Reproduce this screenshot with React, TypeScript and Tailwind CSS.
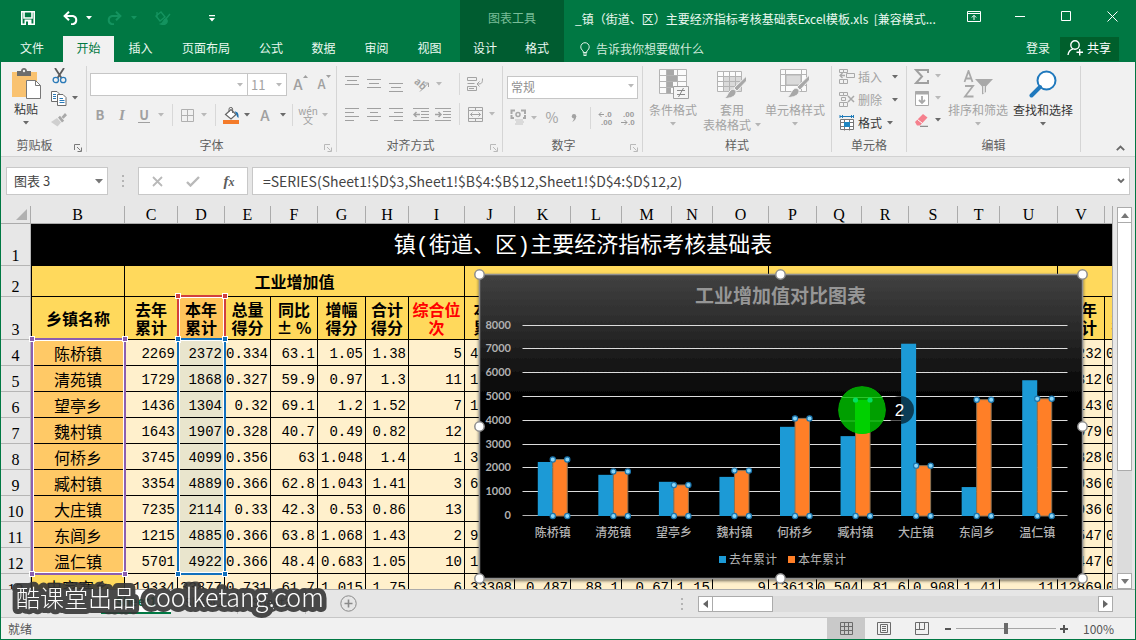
import React from "react";
import type { ReactNode } from "react";

const BORDER_ALL = "border-[#ababab]";

/* ---------- small building blocks ---------- */

function Caret({ className = "text-[#6a6a6a]" }: { className?: string }) {
  return (
    <svg width="6" height="4" viewBox="0 0 6 4" className={className} aria-hidden="true">
      <path d="M0 0h6L3 3.6z" fill="currentColor" />
    </svg>
  );
}

function Tool({ label, className = "w-[22px]", children }: { label: string; className?: string; children: ReactNode }) {
  return (
    <button type="button" aria-label={label} className={`flex h-[22px] shrink-0 items-center justify-center ${className}`}>
      {children}
    </button>
  );
}

function Sep({ className = "w-[10px]" }: { className?: string }) {
  return (
    <span className={`flex h-[22px] shrink-0 justify-center ${className}`}>
      <span className="h-full w-px bg-[#d8d8d8]" />
    </span>
  );
}

function Launcher({ className = "text-[#7a7a7a]" }: { className?: string }) {
  return (
    <button type="button" aria-label="对话框启动器" className={`absolute bottom-0 right-[4px] ${className}`}>
      <svg width="8" height="8" viewBox="0 0 8 8" fill="none" stroke="currentColor">
        <path d="M.5 6V.5H6M3 3l3.5 3.5M7.5 3.5v4h-4" />
      </svg>
    </button>
  );
}

function Group({ label, width, launcher, children }: { label: string; width: string; launcher?: ReactNode; children: ReactNode }) {
  return (
    <section aria-label={label} className={`relative my-1 flex shrink-0 flex-col border-r border-[#d5d5d5] ${width}`}>
      <div className="flex-1">{children}</div>
      <div className="text-center text-xs leading-[14px] text-[#606060]">{label}</div>
      {launcher}
    </section>
  );
}

function BigButton({ icon, lines, className, dark, inlineCaret }: { icon: ReactNode; lines: string[]; className: string; dark?: boolean; inlineCaret?: boolean }) {
  return (
    <button type="button" className={`flex shrink-0 flex-col items-center pt-[2px] text-xs leading-[15px] ${dark ? "text-[#363636]" : "text-[#a3a3a3]"} ${className}`}>
      <span className="mb-[2px] flex h-8 items-center justify-center">{icon}</span>
      {lines.map((l, i) => (
        <span key={l} className="flex items-center gap-1 whitespace-nowrap">
          {l}
          {inlineCaret && i === lines.length - 1 && <Caret className="text-[#b5b5b5]" />}
        </span>
      ))}
      {!inlineCaret && <Caret className={`mt-[5px] ${dark ? "text-[#6a6a6a]" : "text-[#b5b5b5]"}`} />}
    </button>
  );
}

function Lines({ rows, y = 0 }: { rows: [number, number][]; y?: number }) {
  return (
    <svg width="14" height="18" viewBox="0 0 14 18" stroke="#a0a0a0" aria-hidden="true">
      {rows.map(([a, b], i) => (
        <path key={i} d={`M${a} ${y + 0.5 + i * 4}H${b}`} />
      ))}
    </svg>
  );
}

/* ---------- title bar and tabs ---------- */

const TABS: [string, string][] = [
  ["文件", "w-[62px]"],
  ["开始", "w-[51px]"],
  ["插入", "w-[53px]"],
  ["页面布局", "w-[78px]"],
  ["公式", "w-[52px]"],
  ["数据", "w-[53px]"],
  ["审阅", "w-[53px]"],
  ["视图", "w-[53px]"],
];

function Header() {
  return (
    <header className="flex h-[62px] shrink-0 bg-[#007843] text-xs text-[#eaf8f0]">
      <div className="flex w-[459px] shrink-0 flex-col">
        <div className="flex h-9 items-center">
          <Tool label="保存" className="ml-4 w-[22px]">
            <svg width="14" height="14" viewBox="0 0 14 14" fill="none" stroke="#fff" strokeWidth="1.6">
              <path d="M.8.8h12.400v12.400H.8z" />
              <path d="M3 1v6h8V1" />
              <path d="M3.500 8.500h7V14h-7z" fill="#fff" stroke="none" />
              <path d="M5 10.500h2V14H5z" fill="#007843" stroke="none" />
            </svg>
          </Tool>
          <Tool label="撤消" className="ml-[21px] w-[22px]">
            <svg width="16" height="14" viewBox="0 0 16 14" fill="none" stroke="#fff" strokeWidth="2">
              <path d="M1.500 5H10a4.200 4.200 0 0 1 0 8.200H8" />
              <path d="M6 .8 1.600 5 6 9.200" />
            </svg>
          </Tool>
          <Tool label="撤消选项" className="w-[14px]"><Caret className="text-white" /></Tool>
          <Tool label="恢复" className="ml-[7px] w-[22px]">
            <svg width="16" height="14" viewBox="0 0 16 14" fill="none" stroke="#14935f" strokeWidth="2">
              <path d="M14.500 5H6a4.200 4.200 0 0 0 0 8.200h2" />
              <path d="M10 .8 14.400 5 10 9.200" />
            </svg>
          </Tool>
          <Tool label="恢复选项" className="w-[18px]"><Caret className="text-[#14935f]" /></Tool>
          <Tool label="格式刷" className="ml-[8px] w-[22px]">
            <svg width="17" height="16" viewBox="0 0 17 16" fill="none" stroke="#14935f" strokeWidth="1.400">
              <path d="m2 6 5-4 4 5-5 4zM3 2v5M16 4l-5 6" />
              <path d="M12 9c-3 0-2 4-5 5 3 1 7 0 6-4z" fill="#14935f" />
            </svg>
          </Tool>
          <Tool label="自定义快速访问工具栏" className="ml-[28px] w-[22px]">
            <svg width="6" height="7" viewBox="0 0 6 7" fill="#fff"><path d="M0 0h6v1.200H0zM0 3h6L3 6.500z" /></svg>
          </Tool>
        </div>
        <nav className="flex h-[26px]">
          {TABS.map(([name, w]) => (
            <button key={name} type="button" className={`pb-[2px] ${w} ${name === "开始" ? "bg-[#f1f1f1] text-[#007843]" : ""}`}>
              {name}
            </button>
          ))}
        </nav>
      </div>
      <div className="flex w-[104px] shrink-0 flex-col bg-[#005c30]">
        <div className="flex h-9 items-center justify-center text-[#79bd98]">图表工具</div>
        <nav className="flex h-[26px]">
          <button type="button" className="w-[50px] pb-[2px]">设计</button>
          <button type="button" className="w-[54px] pb-[2px]">格式</button>
        </nav>
      </div>
      <div className="flex min-w-0 flex-1 flex-col">
        <div className="flex h-9 items-center">
          <h1 className="min-w-0 flex-1 truncate pl-[11px] pt-[2px] whitespace-pre">
            _镇（街道、区）主要经济指标考核基础表Excel模板.xls  [兼容模式...
          </h1>
          <div className="flex shrink-0 items-center pb-1">
            <Tool label="功能区显示选项" className="w-[46px]">
              <svg width="14" height="11" viewBox="0 0 14 11" fill="none" stroke="#fff"><path d="M.5.5h13v10H.5zM.5 2.500h13M7 9V4.500M4.800 6.500 7 4.300l2.200 2.200" /></svg>
            </Tool>
            <Tool label="最小化" className="w-[46px]">
              <svg width="10" height="10" viewBox="0 0 10 10" stroke="#fff"><path d="M0 5.500h10" /></svg>
            </Tool>
            <Tool label="最大化" className="w-[46px]">
              <svg width="10" height="10" viewBox="0 0 10 10" fill="none" stroke="#fff"><path d="M.5.5h9v9h-9z" /></svg>
            </Tool>
            <Tool label="关闭" className="w-[46px]">
              <svg width="11" height="11" viewBox="0 0 11 11" stroke="#fff"><path d="m.5.5 10 10m0-10-10 10" /></svg>
            </Tool>
          </div>
        </div>
        <div className="flex h-[26px] items-center pr-4">
          <svg width="10" height="14" viewBox="0 0 10 14" fill="none" stroke="#e0f3e9" className="ml-4" aria-hidden="true">
            <path d="M3.200 10.500V9C1.500 7.800.8 6.500.8 4.900a4.200 4.200 0 0 1 8.400 0c0 1.600-.7 2.900-2.400 4.100v1.500zM3 12h4M3.500 13.500h3" />
          </svg>
          <a href="#tell" className="ml-[6px] text-[#cfeadb]">告诉我你想要做什么</a>
          <button type="button" className="ml-auto pb-[2px]">登录</button>
          <button type="button" className="ml-[10px] flex h-6 items-center gap-1 bg-[#005f2c] pb-[2px] pl-[7px] pr-2 text-white">
            <svg width="16" height="16" viewBox="0 0 16 16" fill="none" stroke="#fff" strokeWidth="1.400">
              <circle cx="8" cy="5" r="4.200" />
              <path d="M1 15c.5-3.500 2.500-5.500 5-6.200M9.500 12.200H16M12.700 9v6.500" />
            </svg>
            共享
          </button>
        </div>
      </div>
    </header>
  );
}

/* ---------- ribbon ---------- */

function CellRow({ label, icon, dark }: { label: string; icon: ReactNode; dark?: boolean }) {
  return (
    <button type="button" className={`flex h-[23px] items-center pl-[7px] ${dark ? "text-[#363636]" : "text-[#a3a3a3]"}`}>
      <span className="flex w-[18px] justify-start">{icon}</span>
      <span className="ml-px text-xs">{label}</span>
      <Caret className={`text-[#6a6a6a] ${dark ? "ml-[5px]" : "ml-[10px]"}`} />
    </button>
  );
}

const LIGHT = "text-[#b9b9b9]";

function Ribbon() {
  return (
    <div className="flex h-[95px] shrink-0 border-b border-[#d2d2d2] bg-[#f1f1f1]">
      <Group label="剪贴板" width="w-[86px] pr-[18px]" launcher={<Launcher />}>
        <div className="-mt-px flex">
          <BigButton
            dark
            className="w-[50px]"
            lines={["粘贴"]}
            icon={
              <svg width="29" height="31" viewBox="0 0 29 31" aria-hidden="true">
                <path d="M0 4h25v25H0z" fill="#f9c270" />
                <path d="M5 3h4c0-4 6-4 6 0h4v5H5z" fill="#6d6d6d" />
                <circle cx="12" cy="3" r="1.200" fill="#f1f1f1" />
                <path d="M14.500 12.500h9l5 5v13h-14z" fill="#fff" stroke="#787878" />
                <path d="M23.500 12.500v5h5" fill="none" stroke="#787878" />
              </svg>
            }
          />
          <div className="flex flex-col">
            <Tool label="剪切" className="w-4">
              <svg width="15" height="16" viewBox="0 0 15 16" fill="none">
                <path d="m3 0 6.500 10M12 0 5.500 10" stroke="#5c5c5c" strokeWidth="1.800" />
                <circle cx="3.800" cy="12" r="2.700" stroke="#2a7ab8" strokeWidth="1.300" />
                <circle cx="11.200" cy="12" r="2.700" stroke="#2a7ab8" strokeWidth="1.300" />
              </svg>
            </Tool>
            <div className="flex">
              <Tool label="复制" className="w-4">
                <svg width="16" height="15" viewBox="0 0 16 15" fill="#fff" stroke="#6c6c6c">
                  <path d="M.5.5H6l2.500 2.500v7.500h-8z" />
                  <path d="M6.500 3.500H12l3 3v8H6.500z" />
                  <path d="M2 3.500h3M2 5.500h3M2 7.500h3M8.500 7.500H12M8.500 9.500h5M8.500 11.500h5" stroke="#2a7ab8" />
                </svg>
              </Tool>
              <Tool label="复制选项" className="w-[16px]"><Caret /></Tool>
            </div>
            <Tool label="格式刷" className="w-4">
              <svg width="16" height="14" viewBox="0 0 16 14">
                <path d="m0 9 6-4 4 4.500L6.500 13.500z" fill="#cfcfcf" />
                <path d="m7 4.500 2-1.700 4.200 5L11 9.500zM10.500 4 14 0l2 2.300-3.500 3.500z" fill="#a9a9a9" />
              </svg>
            </Tool>
          </div>
        </div>
      </Group>

      <Group label="字体" width="w-[250px]" launcher={<Launcher className={LIGHT} />}>
        <div className="flex items-start pl-[3px] pt-[7px]">
          <div className="flex h-[23px] w-[158px] items-center border border-[#c6c6c6] bg-white pr-1">
            <input aria-label="字体名称" defaultValue="" className="h-full min-w-0 flex-1 bg-transparent px-1 text-xs outline-none" />
            <Caret className={LIGHT} />
          </div>
          <div className="-ml-px flex h-[23px] w-[40px] items-center border border-[#c6c6c6] bg-white pr-1">
            <input aria-label="字号" defaultValue="11" className="h-full min-w-0 flex-1 bg-transparent pl-[3px] text-[13px] text-[#a3a3a3] outline-none" />
            <Caret className={LIGHT} />
          </div>
          <Tool label="增大字号" className="w-[27px]">
            <span className="flex items-start font-medium text-[#a0a0a0]"><span className="text-[15px] leading-[22px]">A</span><svg width="5" height="3" viewBox="0 0 5 3" className="mt-[2px]"><path d="M0 3h5L2.500 0z" fill="currentColor" /></svg></span>
          </Tool>
          <Tool label="减小字号" className="w-[20px]">
            <span className="flex items-start font-medium text-[#a0a0a0]"><span className="text-[13px] leading-[22px]">A</span><svg width="5" height="3" viewBox="0 0 5 3" className="mt-[2px]"><path d="M0 0h5L2.500 3z" fill="currentColor" /></svg></span>
          </Tool>
        </div>
        <div className="flex pl-[2px] pt-2 text-[13px] text-[#a0a0a0]">
          <Tool label="加粗"><b className="text-[13px]">B</b></Tool>
          <Tool label="倾斜"><i className="font-['Liberation_Serif',serif] text-[15px] font-bold">I</i></Tool>
          <Tool label="下划线"><span className="border-b border-[#a0a0a0] px-px font-bold leading-[14px]">U</span></Tool>
          <Tool label="下划线选项" className="w-3"><Caret className={LIGHT} /></Tool>
          <Sep />
          <Tool label="边框" className="w-5">
            <svg width="13" height="13" viewBox="0 0 13 13" fill="none" stroke="#b0b0b0"><path d="M.5.5h12v12H.5zM6.500.5v12M.5 6.500h12" /></svg>
          </Tool>
          <Tool label="边框选项" className="w-[14px]"><Caret className={LIGHT} /></Tool>
          <Sep className="w-2" />
          <Tool label="填充颜色" className="w-6">
            <svg width="17" height="17" viewBox="0 0 17 17" fill="none">
              <path d="m2.500 7.500 5.500-5 5 5L8 12z" fill="#fff" stroke="#666" strokeWidth="1.200" />
              <path d="M6 5V2.200a1.800 1.800 0 0 1 3.600 0V6" stroke="#666" />
              <path d="M11.500 4.500c3 0 4.500 2 4 6.500-1.500-.5-2-3-2.500-4.500z" fill="#1e6fae" />
              <path d="M0 13h16v4H0z" fill="#f47b2a" />
            </svg>
          </Tool>
          <Tool label="填充选项" className="w-2"><Caret /></Tool>
          <Tool label="字体颜色" className="w-7"><b className="text-[15px] font-medium">A</b></Tool>
          <Tool label="字体颜色选项" className="w-2"><Caret /></Tool>
          <Sep />
          <Tool label="拼音" className="w-[22px]">
            <span className="flex flex-col items-center text-[10px] leading-[9px]"><span>wén</span><span>文</span></span>
          </Tool>
          <Tool label="拼音选项" className="w-3"><Caret className={LIGHT} /></Tool>
        </div>
      </Group>

      <Group label="对齐方式" width="w-[166px] pr-[18px]" launcher={<Launcher className={LIGHT} />}>
        <div className="flex pl-1 pt-[7px]">
          <Tool label="顶端对齐"><Lines y={1} rows={[[0, 14], [2, 12], [0, 14]]} /></Tool>
          <Tool label="垂直居中"><Lines y={4} rows={[[0, 14], [2, 12], [0, 14]]} /></Tool>
          <Tool label="底端对齐"><Lines y={8} rows={[[0, 14], [2, 12], [0, 14]]} /></Tool>
          <Tool label="方向" className="w-[28px]">
            <svg width="20" height="18" viewBox="0 0 20 18" fill="none" stroke="#a3a3a3">
              <text x="3" y="10" fontSize="10" fontWeight="bold" fill="#a3a3a3" stroke="none" transform="rotate(40 6 8)">ab</text>
              <path d="m9 16.500 8-8M13.500 8h4v4" />
            </svg>
          </Tool>
          <Tool label="方向选项" className="w-[8px]"><Caret className={LIGHT} /></Tool>
          <Sep className="ml-3 w-2" />
          <Tool label="自动换行" className="w-6">
            <svg width="17" height="16" viewBox="0 0 17 16" fill="none" stroke="#a3a3a3">
              <path d="M.5 1.500h9v3h-9zM.5 7.500h7M.5 10.500h9v4h-9zM2 12.500h5M15.500 2.500c0 5-1 5.500-5 5.500M12.500 5.500 10 8l2.500 2.500" />
            </svg>
          </Tool>
        </div>
        <div className="flex pl-1 pt-2">
          <Tool label="左对齐"><Lines y={3} rows={[[0, 14], [0, 9], [0, 14], [0, 9]]} /></Tool>
          <Tool label="居中"><Lines y={3} rows={[[0, 14], [3, 11], [0, 14], [3, 11]]} /></Tool>
          <Tool label="右对齐"><Lines y={3} rows={[[0, 14], [5, 14], [0, 14], [5, 14]]} /></Tool>
          <Tool label="减少缩进量" className="w-[28px]">
            <svg width="16" height="13" viewBox="0 0 16 13" fill="none" stroke="#a3a3a3"><path d="M0 .5h16M8 3.500h8M8 6.500h8M8 9.500h8M0 12.500h16" /><path d="M7 6.500H1M3.500 4 1 6.500 3.500 9" strokeWidth="1.500" /></svg>
          </Tool>
          <Tool label="增加缩进量" className="w-4">
            <svg width="16" height="13" viewBox="0 0 16 13" fill="none" stroke="#a3a3a3"><path d="M0 .5h16M8 3.500h8M8 6.500h8M8 9.500h8M0 12.500h16" /><path d="M0 6.500h6M3.500 4 6 6.500 3.500 9" strokeWidth="1.500" /></svg>
          </Tool>
          <Sep className="ml-1 w-2" />
          <Tool label="合并后居中" className="w-6">
            <svg width="15" height="15" viewBox="0 0 15 15" fill="none" stroke="#a3a3a3"><path d="M.5.5h14v14H.5zM.5 3.500h14M.5 11.500h14M7.500.5v3M7.500 11.500v3M2.500 7.500h10M4.500 5.500l-2 2 2 2M10.500 5.500l2 2-2 2" /></svg>
          </Tool>
          <Tool label="合并选项" className="w-[10px]"><Caret className={LIGHT} /></Tool>
        </div>
      </Group>

      <Group label="数字" width="w-[140px] pr-[18px]" launcher={<Launcher className={LIGHT} />}>
        <div className="-mr-[18px] px-1 pt-[7px]">
          <div className="relative">
            <select aria-label="数字格式" className="h-[23px] w-full appearance-none border border-[#c6c6c6] bg-white pl-[3px] text-xs text-[#8f8f8f]">
              <option>常规</option>
            </select>
            <span className="pointer-events-none absolute inset-y-0 right-1 flex items-center"><Caret className={LIGHT} /></span>
          </div>
        </div>
        <div className="flex pl-[3px] pt-2 text-[#a3a3a3]">
          <Tool label="会计数字格式" className="w-6">
            <svg width="17" height="17" viewBox="0 0 17 17" fill="none" stroke="#a9a9a9"><path d="M1.500 5V1.500H5M11 1.500h4V5M1.500 6v3H4M15 6v3h-2" strokeWidth="2" /><circle cx="8" cy="5.500" r="2" strokeWidth="1.500" /><path d="M5 11h8M6 13h8M5 15h8" strokeWidth="1.200" stroke="#c4c4c4" /></svg>
          </Tool>
          <Tool label="会计格式选项" className="w-2"><Caret className={LIGHT} /></Tool>
          <Tool label="百分比样式" className="w-7"><span className="text-[14px]">%</span></Tool>
          <Tool label="千位分隔样式" className="w-4">
            <svg width="6" height="8" viewBox="0 0 6 8" fill="#a3a3a3"><circle cx="3" cy="2.200" r="2.200" /><path d="M5.200 2c0 3-1.500 5-4 6 1-1.500 1.800-2.500 1.800-4z" /></svg>
          </Tool>
          <Sep className="ml-1 w-2" />
          <Tool label="增加小数位数" className="w-[24px]">
            <svg width="17" height="20" viewBox="0 0 17 20" fill="#9b9b9b" fontSize="8" fontWeight="bold" className="font-['Liberation_Sans',sans-serif]"><text x="7" y="9">.0</text><text x="3" y="17">.00</text><path d="M1 6.500h5M3.500 4 1 6.500 3.500 9" stroke="#9b9b9b" fill="none" /></svg>
          </Tool>
          <Tool label="减少小数位数" className="w-[20px]">
            <svg width="17" height="20" viewBox="0 0 17 20" fill="#9b9b9b" fontSize="8" fontWeight="bold" className="font-['Liberation_Sans',sans-serif]"><text x="3" y="9">.00</text><text x="8" y="17">.0</text><path d="M1 14.500h6M4.500 12 7 14.500 4.500 17" stroke="#9b9b9b" fill="none" /></svg>
          </Tool>
        </div>
      </Group>

      <Group label="样式" width="w-[189px]">
        <div className="flex">
          <BigButton
            className="w-[60px]"
            lines={["条件格式"]}
            icon={
              <svg width="31" height="30" viewBox="0 0 31 30" fill="none" stroke="#b4b4b4">
                <path d="M1.500.5h27v24h-27zM1.500 6.500h27M1.500 12.500h27M1.500 18.500h27M8.500.5v24M19.500.5v24" fill="#fbfbfb" />
                <path d="M9 1h7v5H9zM9 7h10v5H9zM9 13h6v5H9zM9 19h4v5H9z" fill="#a8a8a8" stroke="none" />
                <path d="M15.500 17.500h15v12h-15z" fill="#f5f5f5" stroke="#a0a0a0" />
                <path d="M19 21.500h8M19 25.500h8M25.500 19l-5 9" stroke="#8a8a8a" />
              </svg>
            }
          />
          <BigButton
            className="w-[58px]"
            inlineCaret
            lines={["套用", "表格格式"]}
            icon={
              <svg width="30" height="30" viewBox="0 0 30 30" fill="none" stroke="#b4b4b4">
                <path d="M.5 2.500h24v20H.5z" fill="#fbfbfb" />
                <path d="M7 8h17v14H7z" fill="#dadada" stroke="none" />
                <path d="M.5 7.500h24M.5 12.500h24M.5 17.500h24M6.500 2.500v20M12.500 2.500v20M18.500 2.500v20" />
                <path d="M29.500 7v5L20 22l-3-3z" fill="#a8a8a8" stroke="#f1f1f1" />
                <path d="M16 20c3 1 4 3 2 6-2 2.500-6 3.500-11 3.500 4-2 4-8 9-9.500z" fill="#a8a8a8" stroke="#f1f1f1" />
              </svg>
            }
          />
          <BigButton
            className="w-[68px]"
            lines={["单元格样式"]}
            icon={
              <svg width="30" height="30" viewBox="0 0 30 30" fill="none" stroke="#b4b4b4">
                <path d="M.5.5h26v22H.5z" fill="#fbfbfb" />
                <path d="M6 6h15v10H6z" fill="#dadada" />
                <path d="M.5 5.500h26M.5 16.500h26M5.500.5v22M21.500.5v22" />
                <path d="M29.500 6v5L20 21l-3-3z" fill="#a8a8a8" stroke="#f1f1f1" />
                <path d="M16 19c3 1 4 3 2 6-2 2.500-6 3.500-11 3.500 4-2 4-8 9-9.500z" fill="#a8a8a8" stroke="#f1f1f1" />
              </svg>
            }
          />
        </div>
      </Group>

      <Group label="单元格" width="w-[75px]">
        <div className="-mt-px flex flex-col items-start">
          <CellRow label="插入" icon={<svg width="16" height="15" viewBox="0 0 16 15" fill="none" stroke="#a9a9a9"><path d="M.5.5h4v3h-4zM4.500.5h4v3h-4zM7.500 4.500h8v4h-8zM.5 10.500h4v4h-4zM4.500 10.500h4v4h-4z" /><path d="M6 6.500H1M3.500 4 1 6.500 3.500 9" strokeWidth="1.300" /></svg>} />
          <CellRow label="删除" icon={<svg width="16" height="15" viewBox="0 0 16 15" fill="none" stroke="#a9a9a9"><path d="M.5.5h4v3h-4zM4.500.5h4v3h-4zM2.500 5.500h4v3h-4zM.5 10.500h4v4h-4zM4.500 10.500h4v4h-4z" /><path d="m9 4 6 6m0-6-6 6" strokeWidth="1.500" /></svg>} />
          <CellRow label="格式" dark icon={<svg width="16" height="16" viewBox="0 0 16 16" fill="none"><path d="M1.500 4.500h13v10h-13zM1.500 7.500h13M1.500 11.500h13M5.500 4.500v11M10.500 4.500v11" fill="#fff" stroke="#777" /><path d="M5 7h6v5H5z" fill="#1f86c0" /><path d="M1 1.500h14M1 0v3M14.500 0v3M4 0 2.500 1.500 4 3M12 0l1.500 1.500L12 3" stroke="#1f7ab8" /></svg>} />
        </div>
      </Group>

      <Group label="编辑" width="w-[174px]">
        <div className="flex">
          <div className="-mt-px flex w-[39px] flex-col pl-[5px]">
            <div className="flex"><Tool label="自动求和" className="w-[19px]"><svg width="15" height="15" viewBox="0 0 15 15" fill="none" stroke="#a0a0a0" strokeWidth="2"><path d="M14 4V1H2l6 6.500L2 14h12v-3" /></svg></Tool><Tool label="求和选项" className="w-[14px]"><Caret className={LIGHT} /></Tool></div>
            <div className="flex"><Tool label="填充" className="w-[19px]"><svg width="14" height="15" viewBox="0 0 14 15" fill="none" stroke="#a9a9a9"><path d="M.5.5h13v14H.5z" fill="#fff" /><path d="M.5 2h13" strokeWidth="3" /><path d="M7 5v7M4 9l3 3 3-3" strokeWidth="1.800" /></svg></Tool><Tool label="填充选项" className="w-[14px]"><Caret className={LIGHT} /></Tool></div>
            <div className="flex"><Tool label="清除" className="w-[19px]"><svg width="14" height="13" viewBox="0 0 14 13"><path d="m0 8 8-8 4.500 3.500L5 11.500H2z" fill="#f5808d" /><path d="m2.500 5.500 5 4" stroke="#fff" strokeWidth="1" /><path d="M5 12.300h8" stroke="#777" /></svg></Tool><Tool label="清除选项" className="w-[14px]"><Caret /></Tool></div>
          </div>
          <BigButton
            className="w-[64px]"
            lines={["排序和筛选"]}
            icon={
              <svg width="30" height="28" viewBox="0 0 30 28" fill="none" stroke="#a9a9a9" strokeWidth="1.800">
                <path d="M1.500 12 5.500 1l4 11M3 8.500h5M2 16h8L2 26.500h8.500" />
                <path d="M12 9h18l-7 7.500V22l-4 2.500v-8z" fill="#a9a9a9" stroke="none" />
                <path d="M21 16v7" stroke="#f1f1f1" strokeWidth="1.500" />
              </svg>
            }
          />
          <BigButton
            dark
            className="w-[66px]"
            lines={["查找和选择"]}
            icon={
              <svg width="28" height="28" viewBox="0 0 28 28" fill="none" stroke="#2079bd">
                <circle cx="17.500" cy="10.500" r="9" fill="#fff" strokeWidth="2" />
                <path d="m11 17-8.500 8.500" strokeWidth="4" strokeLinecap="round" />
              </svg>
            }
          />
        </div>
      </Group>
      <div className="flex flex-1 items-end justify-end pb-[5px] pr-[10px]">
        <button type="button" aria-label="折叠功能区">
          <svg width="9" height="6" viewBox="0 0 9 6" fill="none" stroke="#6a6a6a" strokeWidth="1.800"><path d="M.8 5.200 4.500 1.500l3.700 3.700" /></svg>
        </button>
      </div>
    </div>
  );
}

function FormulaBar() {
  return (
    <div className="flex h-[49px] shrink-0 items-start bg-[#e7e7e7] px-[5px] pt-[10px]">
      <div className="flex h-7 w-[102px] items-center border border-[#c8c8c8] bg-white pr-1">
        <input aria-label="名称框" defaultValue="图表 3" className="min-w-0 flex-1 bg-transparent pl-[7px] text-[13px] text-[#444] outline-none" />
        <svg width="8" height="5" viewBox="0 0 8 5" aria-hidden="true"><path d="M0 0h8L4 4.500z" fill="#777" /></svg>
      </div>
      <div className="flex h-7 w-[30px] flex-col items-center justify-center gap-[3px]">
        <i className="size-[2px] bg-[#b4b4b4]" /><i className="size-[2px] bg-[#b4b4b4]" /><i className="size-[2px] bg-[#b4b4b4]" />
      </div>
      <div className="flex h-7 w-[110px] items-center border border-[#c8c8c8] bg-white text-[#b9b9b9]">
        <Tool label="取消" className="w-9"><svg width="11" height="11" viewBox="0 0 11 11" stroke="currentColor" strokeWidth="1.800"><path d="m1 1 9 9m0-9-9 9" /></svg></Tool>
        <Tool label="输入" className="w-9"><svg width="14" height="11" viewBox="0 0 14 11" fill="none" stroke="currentColor" strokeWidth="2.400"><path d="m1 6 3.500 3.500L13 1" /></svg></Tool>
        <Tool label="插入函数" className="w-9"><i className="font-['Liberation_Serif',serif] text-[15px] font-bold text-[#5c5c5c]">f<span className="text-[12px]">x</span></i></Tool>
      </div>
      <div className="ml-1 flex h-7 min-w-0 flex-1 items-center border border-[#c8c8c8] bg-white pr-1">
        <input
          aria-label="编辑栏"
          defaultValue="=SERIES(Sheet1!$D$3,Sheet1!$B$4:$B$12,Sheet1!$D$4:$D$12,2)"
          className="min-w-0 flex-1 bg-transparent pl-[10px] text-[14px] text-[#444] outline-none"
        />
        <svg width="8" height="6" viewBox="0 0 8 6" fill="none" stroke="#6a6a6a" strokeWidth="1.800" aria-hidden="true"><path d="m1 1 3 3 3-3" /></svg>
      </div>
    </div>
  );
}

/* ---------- worksheet ---------- */

const COLS: [string, number][] = [
  ["B", 94], ["C", 53], ["D", 47], ["E", 46], ["F", 47], ["G", 48], ["H", 43], ["I", 56],
  ["J", 50], ["K", 56], ["L", 51], ["M", 50], ["N", 41], ["O", 56], ["P", 48], ["Q", 45],
  ["R", 47], ["S", 49], ["T", 42], ["U", 58], ["V", 47], ["W", 46],
];

const TOWNS = ["陈桥镇", "清苑镇", "望亭乡", "魏村镇", "何桥乡", "臧村镇", "大庄镇", "东闾乡", "温仁镇"];
const LAST = [2269, 1729, 1436, 1643, 3745, 3354, 7235, 1215, 5701];
const THIS = [2372, 1868, 1304, 1907, 4099, 4889, 2114, 4885, 4922];
const REST = [
  ["0.334", "63.1", "1.05", "1.38", "5", "47310"],
  ["0.327", "59.9", "0.97", "1.3", "11", "16254"],
  ["0.32", "69.1", "1.2", "1.52", "7", "12870"],
  ["0.328", "40.7", "0.49", "0.82", "12", "2415"],
  ["0.356", "63", "1.048", "1.4", "1", "31926"],
  ["0.366", "62.8", "1.043", "1.41", "3", "60117"],
  ["0.33", "42.3", "0.53", "0.86", "13", "7402"],
  ["0.366", "63.8", "1.068", "1.43", "2", "90236"],
  ["0.366", "48.4", "0.683", "1.05", "10", "13805"],
];
const V_COL = ["11232", "10312", "12143", "10079", "10828", "11936", "12936", "10547", "11447"];
const ROW13 = ["史家寨乡", "19334", "33877", "0.731", "61.7", "1.015", "1.75", "6", "33308", "0.487", "88.1", "0.67", "1.15", "9", "13613", "0.504", "81.6", "0.908", "1.41", "11", "12869", "0.521"];

const HEADS: string[][] = [
  ["乡镇名称"], ["去年", "累计"], ["本年", "累计"], ["总量", "得分"], ["同比", "± %"], ["增幅", "得分"], ["合计", "得分"], ["综合位", "次"],
  ["本年", "累计"], ...Array.from({ length: 11 }, () => [] as string[]),
  ["本年", "累计"], ["总量", "得分"],
];

const DATA: string[][] = TOWNS.map((t, i) => [
  t, String(LAST[i]), String(THIS[i]), ...REST[i], ...Array(11).fill(""), V_COL[i], "0.456",
]);

function RowHead({ n }: { n: number }) {
  return (
    <th scope="row" className="border-b border-r border-[#b5b5b5] bg-[#e7e7e7] p-0 align-bottom font-['Liberation_Serif',serif] text-base font-normal leading-[18px]">
      {n}
    </th>
  );
}

function Sheet() {
  const line = "border-b border-r border-black p-0";
  return (
    <table className="w-max table-fixed border-separate border-spacing-0 text-black">
      <colgroup>
        <col className="w-[30px]" />
        {COLS.map(([n, w]) => <col key={n} style={{ width: w }} />)}
      </colgroup>
      <thead>
        <tr className="h-[18px]">
          <th className="border-b border-r border-[#ababab] p-0">
            <svg width="11" height="11" viewBox="0 0 11 11" className="ml-[15px] block" aria-hidden="true"><path d="M11 0v11H0z" fill="#b1b1b1" /></svg>
          </th>
          {COLS.map(([n]) => (
            <th key={n} scope="col" className="border-b border-r border-[#ababab] p-0 font-['Liberation_Serif',serif] text-base font-normal leading-[17px]">{n}</th>
          ))}
        </tr>
      </thead>
      <tbody>
        <tr className="h-[42px]">
          <RowHead n={1} />
          <td colSpan={22} className="bg-black p-0 pr-4 pt-1 text-center font-['Liberation_Mono','Noto_Sans_CJK_SC',monospace] text-[22px] leading-[30px] text-white">
            镇(街道、区)主要经济指标考核基础表
          </td>
        </tr>
        <tr className="h-[31px] bg-[#ffd95c] text-base font-bold leading-5">
          <RowHead n={2} />
          <td className={`${line} border-l`} />
          <td colSpan={7} className={`${line} text-center`}>工业增加值</td>
          <td colSpan={6} className={line} />
          <td colSpan={6} className={line} />
          <td colSpan={2} className={line} />
        </tr>
        <tr className="h-[43px] bg-[#ffd95c] text-base leading-[18px]">
          <RowHead n={3} />
          {HEADS.map((h, i) => (
            <td key={i} className={`${line} whitespace-nowrap text-center font-bold ${i === 0 ? "border-l" : ""} ${i === 2 ? "bg-[#ffc45c]" : ""} ${h[1] === "次" ? "text-[#f00]" : ""}`}>
              {h.map((t) => <div key={t}>{t}</div>)}
            </td>
          ))}
        </tr>
        {[...DATA, ROW13].map((row, r) => (
          <tr key={r} className="h-[26px] bg-[#fff0cc]">
            <RowHead n={r + 4} />
            {row.map((v, c) =>
              c === 0 ? (
                <td key={c} className={`${line} border-l text-center text-base leading-[22px] ${r === 9 ? "bg-[#ffd95c]" : "bg-[#ffc966]"}`}>{v}</td>
              ) : (
                <td key={c} className={`${line} pr-[2px] pt-[2px] text-right font-['Liberation_Mono',monospace] text-[14px] leading-[18px] ${c === 2 && r < 9 ? "bg-[#e9e5cd]" : ""}`}>{v}</td>
              )
            )}
          </tr>
        ))}
      </tbody>
    </table>
  );
}

function RangeBox({ place, tone, fill }: { place: string; tone: string; fill: string }) {
  const dot = `absolute size-[6px] border border-white ${fill}`;
  return (
    <div className={`pointer-events-none absolute border-2 outline-1 -outline-offset-3 outline-white ${tone} ${place}`}>
      <i className={`${dot} -left-1 -top-1`} />
      <i className={`${dot} -right-1 -top-1`} />
      <i className={`${dot} -bottom-1 -left-1`} />
      <i className={`${dot} -bottom-1 -right-1`} />
    </div>
  );
}

/* ---------- embedded chart ---------- */

function ChartObject() {
  const base = 516;
  const k = 190.5 / 8000;
  const step = 545 / 9;
  const cx = (i: number) => 522.5 + step * (i + 0.5);
  const knobs = [[479.5, 274.5], [780.5, 274.5], [1082.5, 274.5], [479.5, 426.5], [1082.5, 426.5], [479.5, 578.5], [780.5, 578.5], [1082.5, 578.5]];
  return (
    <svg
      width="620" height="320" viewBox="472 267 620 320"
      className="absolute left-[471px] top-[61px] font-['Lato','Noto_Sans_CJK_SC',sans-serif]"
      role="img" aria-label="工业增加值对比图表"
    >
      <defs>
        <linearGradient id="bg" x1="0" y1="0" x2="0" y2="1">
          <stop offset="0" stopColor="#414141" />
          <stop offset="0.2" stopColor="#272727" />
          <stop offset="0.42" stopColor="#000" />
        </linearGradient>
        <clipPath id="spot"><circle cx="862" cy="410" r="24" /></clipPath>
        <filter id="sh" x="-2%" y="-2%" width="104%" height="106%"><feDropShadow dx="0" dy="1.500" stdDeviation="1.500" floodOpacity="0.6" /></filter>
      </defs>
      <rect x="479.500" y="274.500" width="603" height="304" fill="url(#bg)" stroke="#8f8f8f" strokeWidth="1.500" filter="url(#sh)" />
      <text x="780.500" y="303" fontSize="19" fontWeight="bold" textAnchor="middle" fill="#969696">工业增加值对比图表</text>
      {[8, 7, 6, 5, 4, 3, 2, 1, 0].map((n) => {
        const y = Math.round(base - n * 1000 * k) - 0.5;
        return (
          <g key={n}>
            <path d={`M522.500 ${y}H1067.500`} stroke={n ? "#dcdcdc" : "#b4b4b4"} />
            <text x="511" y={y + 3.5} fontSize="11" fontWeight="bold" textAnchor="end" fill="#b0b0b0">{n * 1000}</text>
          </g>
        );
      })}
      {TOWNS.map((t, i) => {
        const c = cx(i);
        return (
          <g key={t}>
            <rect x={c - 15} y={base - LAST[i] * k} width="15" height={LAST[i] * k} fill="#1c9ad6" />
            <rect x={c} y={base - THIS[i] * k} width="14.500" height={THIS[i] * k} rx="2" fill="#ff7f27" stroke="#8b7355" />
            {[[0, THIS[i]], [14.5, THIS[i]], [0, 0], [14.5, 0]].map(([dx, v], j) => (
              <circle key={j} cx={c + dx} cy={base - v * k} r="2.600" fill="#8ad6f8" stroke="#1b75ad" strokeWidth="1.200" />
            ))}
            <text x={c} y="537" fontSize="12" fontWeight="500" textAnchor="middle" fill="#b4b4b4">{t}</text>
          </g>
        );
      })}
      <rect x="719" y="556" width="7" height="7" fill="#1c9ad6" />
      <text x="729" y="564" fontSize="12" fill="#b4b4b4">去年累计</text>
      <rect x="788" y="556" width="7" height="7" fill="#ff7f27" />
      <text x="798" y="564" fontSize="12" fill="#b4b4b4">本年累计</text>
      <circle cx="900" cy="410" r="14" fill="#000" fillOpacity="0.6" />
      <text x="899.500" y="416" fontSize="17" textAnchor="middle" fill="#fff" className="font-['Liberation_Sans',sans-serif]">2</text>
      <g clipPath="url(#spot)">
        <circle cx="862" cy="410" r="24" fill="#009f00" />
        <path d="M838 397.500h48M838 421h17M870 421h17" stroke="#2cc52c" />
        <rect x="855" y="400" width="15" height="40" rx="2" fill="#00d000" />
        <circle cx="855.500" cy="400" r="2.600" fill="#00e060" /><circle cx="870" cy="400" r="2.600" fill="#00e060" />
      </g>
      {knobs.map(([x, y]) => <circle key={`${x}-${y}`} cx={x} cy={y} r="4.700" fill="#fff" stroke="#8c8c8c" strokeWidth="1.500" />)}
    </svg>
  );
}

function VScroll() {
  const box = `flex h-4 items-center justify-center border bg-white ${BORDER_ALL}`;
  return (
    <div className="flex w-[22px] shrink-0 flex-col bg-[#e7e7e7] pl-1 pr-[3px] pt-px">
      <button type="button" aria-label="向上滚动" className={box}><svg width="8" height="5" viewBox="0 0 8 5"><path d="M0 5h8L4 0z" fill="#777" /></svg></button>
      <div className="flex flex-1 flex-col bg-[#dcdcdc]">
        <div className={`-mt-px h-[71%] border bg-white ${BORDER_ALL}`} />
      </div>
      <button type="button" aria-label="向下滚动" className={box}><svg width="8" height="5" viewBox="0 0 8 5"><path d="M0 0h8L4 5z" fill="#777" /></svg></button>
    </div>
  );
}

function SheetTabs() {
  const box = `flex h-4 w-[15px] shrink-0 items-center justify-center border bg-white ${BORDER_ALL}`;
  return (
    <div className="relative flex h-7 shrink-0 items-center border-t border-[#ababab] bg-[#e6e6e6] text-xs text-[#444]">
      <nav className="flex h-full items-start pl-[100px]">
        <button type="button" className="h-6 w-[70px] border-b-2 border-[#007843] bg-white font-bold text-[#007843]">Sheet1</button>
        <button type="button" className="h-6 w-[67px] border-r border-[#c0c0c0]">Sheet2</button>
        <button type="button" className="h-6 w-[68px] border-r border-[#c0c0c0]">Sheet3</button>
      </nav>
      <button type="button" aria-label="新工作表" className="ml-[34px]">
        <svg width="17" height="17" viewBox="0 0 17 17" fill="none" stroke="#8a8a8a"><circle cx="8.500" cy="8.500" r="7.700" /><path d="M4.500 8.500h8M8.500 4.500v8" strokeWidth="1.600" /></svg>
      </button>
      <div className="ml-auto mr-[22px] flex w-[432px] items-center">
        <span className="mr-[15px] flex w-[2px] flex-col gap-[3px]">
          <i className="size-[2px] bg-[#b4b4b4]" /><i className="size-[2px] bg-[#b4b4b4]" /><i className="size-[2px] bg-[#b4b4b4]" />
        </span>
        <button type="button" aria-label="向左滚动" className={box}><svg width="5" height="8" viewBox="0 0 5 8"><path d="M5 0v8L0 4z" fill="#666" /></svg></button>
        <div className="h-4 flex-1 bg-[#dcdcdc]"><div className={`-ml-px h-4 w-[61px] border bg-white ${BORDER_ALL}`} /></div>
        <button type="button" aria-label="向右滚动" className={box}><svg width="5" height="8" viewBox="0 0 5 8"><path d="M0 0v8l5-4z" fill="#666" /></svg></button>
      </div>
      <svg width="340" height="48" viewBox="0 0 340 48" className="pointer-events-none absolute -top-3 left-0 opacity-90" fill="#fff" stroke="#363636" strokeWidth="10" strokeLinejoin="round" strokeLinecap="round" paintOrder="stroke" fontWeight="300">
        <text x="15" y="29" fontSize="24">酷课堂出品<tspan x="143" fontSize="25">coolketang.com</tspan></text>
      </svg>
    </div>
  );
}

function StatusBar() {
  return (
    <footer className="flex h-[22px] shrink-0 items-stretch border-t border-[#c6c6c6] bg-[#f1f1f1] text-xs text-[#555]">
      <span className="flex items-center pl-[7px]">就绪</span>
      <div className="ml-auto flex items-center">
        <button type="button" aria-label="普通" className="flex h-full w-[38px] items-center justify-center bg-[#c9c9c9]">
          <svg width="13" height="13" viewBox="0 0 13 13" fill="none" stroke="#6a6a6a"><path d="M.5.5h12v12H.5zM4.500.5v12M8.500.5v12M.5 4.500h12M.5 8.500h12" /></svg>
        </button>
        <button type="button" aria-label="页面布局" className="flex h-full w-[38px] items-center justify-center">
          <svg width="14" height="13" viewBox="0 0 14 13" fill="none" stroke="#6a6a6a"><path d="M.5.5h13v12H.5zM3.500 2.500h7v8h-7zM5 4.500h4M5 6.500h4M5 8.500h4" /></svg>
        </button>
        <button type="button" aria-label="分页预览" className="flex h-full w-[38px] items-center justify-center">
          <svg width="14" height="13" viewBox="0 0 14 13" fill="none" stroke="#6a6a6a"><path d="M.5.5h13v12H.5zM4.500.5v7M9.500.5v7M.5 7.500h9" /></svg>
        </button>
        <button type="button" aria-label="缩小" className="ml-1 flex w-[11px] justify-start"><i className="h-[2px] w-[6px] bg-[#555]" /></button>
        <input
          type="range" min={10} max={190} defaultValue={100} aria-label="缩放"
          className="h-3 w-[100px] appearance-none bg-transparent bg-[linear-gradient(#a6a6a6,#a6a6a6)] bg-[length:100%_1px] bg-center bg-no-repeat [&::-webkit-slider-thumb]:h-[11px] [&::-webkit-slider-thumb]:w-1 [&::-webkit-slider-thumb]:appearance-none [&::-webkit-slider-thumb]:bg-[#6a6a6a]"
        />
        <button type="button" aria-label="放大" className="ml-1"><svg width="8" height="8" viewBox="0 0 8 8" stroke="#555" strokeWidth="2"><path d="M0 4h8M4 0v8" /></svg></button>
        <span className="ml-[15px] w-[52px] text-xs">100%</span>
      </div>
    </footer>
  );
}

export default function App() {
  return (
    <div className="flex h-screen flex-col overflow-hidden border-x border-b border-[#007843] bg-[#e7e7e7] font-['Noto_Sans_CJK_SC',sans-serif]">
      <Header />
      <Ribbon />
      <FormulaBar />
      <main className="flex min-h-0 flex-1">
        <div className="relative min-w-0 flex-1 overflow-hidden border-r border-[#ababab]">
          <Sheet />
          <RangeBox place="left-[30px] top-[132px] h-[237px] w-[95px]" tone="border-[#8c5fb0]" fill="bg-[#8c5fb0]" />
          <RangeBox place="left-[176px] top-[89px] h-[46px] w-[49px]" tone="border-[#d13f3f]" fill="bg-[#d13f3f]" />
          <RangeBox place="left-[176px] top-[132px] h-[237px] w-[49px]" tone="border-[#1170bd]" fill="bg-[#1170bd]" />
          <ChartObject />
        </div>
        <VScroll />
      </main>
      <SheetTabs />
      <StatusBar />
    </div>
  );
}
